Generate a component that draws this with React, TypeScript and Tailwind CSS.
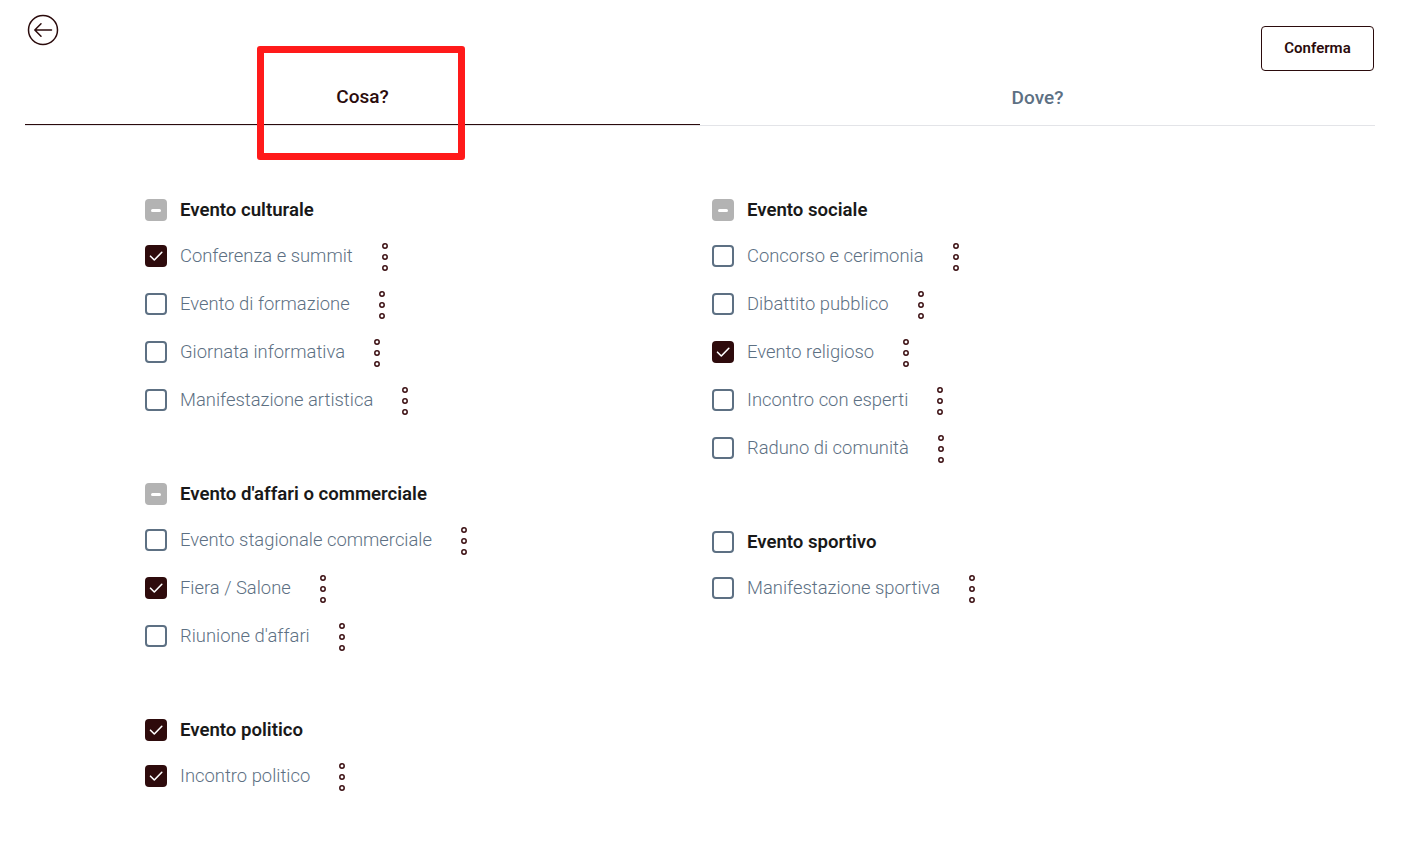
import * as React from "react";

type Item = { label: string; checked?: boolean };
type Group = { title: string; state: "mixed" | "checked" | "empty"; items: Item[] };

const leftGroups: Group[] = [
  {
    title: "Evento culturale",
    state: "mixed",
    items: [
      { label: "Conferenza e summit", checked: true },
      { label: "Evento di formazione" },
      { label: "Giornata informativa" },
      { label: "Manifestazione artistica" },
    ],
  },
  {
    title: "Evento d'affari o commerciale",
    state: "mixed",
    items: [
      { label: "Evento stagionale commerciale" },
      { label: "Fiera / Salone", checked: true },
      { label: "Riunione d'affari" },
    ],
  },
  {
    title: "Evento politico",
    state: "checked",
    items: [{ label: "Incontro politico", checked: true }],
  },
];

const rightGroups: Group[] = [
  {
    title: "Evento sociale",
    state: "mixed",
    items: [
      { label: "Concorso e cerimonia" },
      { label: "Dibattito pubblico" },
      { label: "Evento religioso", checked: true },
      { label: "Incontro con esperti" },
      { label: "Raduno di comunità" },
    ],
  },
  {
    title: "Evento sportivo",
    state: "empty",
    items: [{ label: "Manifestazione sportiva" }],
  },
];

const Box = ({ state }: { state: "mixed" | "checked" | "empty" }) => {
  if (state === "mixed") {
    return (
      <span className="flex h-[22px] w-[22px] shrink-0 items-center justify-center rounded-[4px] bg-[#b3b3b3]">
        <span className="h-[3px] w-[10px] rounded-sm bg-white" />
      </span>
    );
  }
  if (state === "checked") {
    return (
      <span className="flex h-[22px] w-[22px] shrink-0 items-center justify-center rounded-[4px] bg-[#2e0b0c]">
        <svg width="22" height="22" viewBox="0 0 22 22" fill="none">
          <path d="M5.5 11.2l3.8 3.8L16.8 7.3" stroke="white" strokeWidth="1.6" strokeLinecap="round" strokeLinejoin="round" />
        </svg>
      </span>
    );
  }
  return <span className="h-[22px] w-[22px] shrink-0 rounded-[4px] border-2 border-[#5d7083]" />;
};

const Kebab = () => (
  <svg width="8" height="30" viewBox="0 0 8 30" fill="none" className="ml-[28px] mt-[2px]">
    <g stroke="#3b0f12" strokeWidth="1.5">
      <circle cx="4" cy="4" r="2.2" />
      <circle cx="4" cy="15" r="2.2" />
      <circle cx="4" cy="26" r="2.2" />
    </g>
  </svg>
);

const GroupBlock = ({ group }: { group: Group }) => (
  <div className="mb-[48px]">
    <div className="flex h-[44px] items-center gap-[13px]">
      <Box state={group.state} />
      <span className="relative top-[1px] text-[18.6px] font-semibold text-[#191919]">{group.title}</span>
    </div>
    {group.items.map((it) => (
      <div key={it.label} className="flex h-12 items-center">
        <Box state={it.checked ? "checked" : "empty"} />
        <span className="ml-[13px] text-[18.4px] font-light text-[#5d7083]">{it.label}</span>
        <Kebab />
      </div>
    ))}
  </div>
);

export default function App() {
  return (
    <div className="relative min-h-screen w-full bg-white font-['Roboto',sans-serif]">
      <div className="flex h-[71px] items-start justify-between">
        <button className="ml-[27px] mt-[14px]">
          <svg width="32" height="32" viewBox="0 0 32 32" fill="none">
            <circle cx="16" cy="16" r="14.5" stroke="#2b0b0c" strokeWidth="1.5" />
            <path d="M24.5 16H8M14 9.8L7.8 16l6.2 6.2" stroke="#2b0b0c" strokeWidth="1.5" strokeLinecap="round" strokeLinejoin="round" />
          </svg>
        </button>
        <button className="mr-[46px] mt-[26px] h-[45px] w-[113px] rounded-[4px] border border-[#2b0b0c] text-[15px] font-semibold text-[#2b0b0c]">
          Conferma
        </button>
      </div>

      <div className="ml-[25px] mr-[45px] flex h-[55px] border-b border-[#e3e4e8]">
        <div className="flex h-[54px] flex-1 items-center justify-center border-b border-[#2b0b0c] text-[19px] font-medium text-[#2b0b0c]">
          Cosa?
        </div>
        <div className="flex h-[54px] flex-1 items-center justify-center text-[19px] font-medium text-[#5d7083]">
          Dove?
        </div>
      </div>

      <div className="grid grid-cols-[567px_1fr] pl-[145px] pt-[62px]">
        <div>
          {leftGroups.map((g) => (
            <GroupBlock key={g.title} group={g} />
          ))}
        </div>
        <div>
          {rightGroups.map((g) => (
            <GroupBlock key={g.title} group={g} />
          ))}
        </div>
      </div>

      <div className="pointer-events-none absolute left-[257px] top-[46px] h-[114px] w-[208px] rounded-[3px] border-[7px] border-[#ff1a1a]" />
    </div>
  );
}
